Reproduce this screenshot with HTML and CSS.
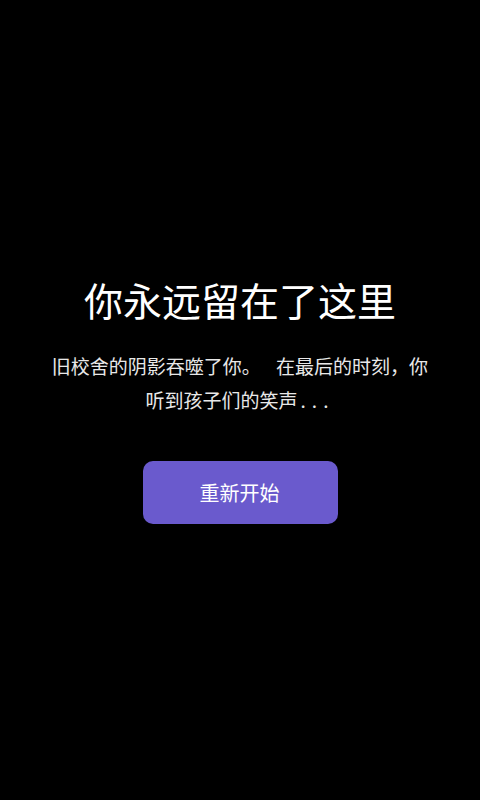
FILE: index.html
```html
<!DOCTYPE html>
<html lang="zh-CN">
<head>
<meta charset="utf-8">
<title>结局</title>
<link rel="stylesheet" href="styles.css">
</head>
<body>
<main class="ending">
  <h1 class="ending-title">你永远留在了这里</h1>
  <p class="ending-text">旧校舍的阴影吞噬了你。 在最后的时刻，你听到孩子们的笑声<span class="dots">...</span></p>
  <button class="restart-btn" type="button">重新开始</button>
</main>
</body>
</html>
```

FILE: styles.css
```css
html, body {
  margin: 0;
  padding: 0;
  background: #000;
}

body {
  font-family: "Noto Sans CJK SC", "Noto Sans", sans-serif;
  color: #fff;
}

.ending {
  height: 100vh;
  display: flex;
  flex-direction: column;
  align-items: center;
  justify-content: center;
  text-align: center;
}

.ending-title {
  margin: 0;
  font-size: 39px;
  font-weight: 400;
  line-height: 47px;
  color: #fff;
}

.ending-text {
  width: 384px;
  margin: 26px 0 0;
  font-size: 19px;
  line-height: 34px;
  color: #e8e8e8;
  word-spacing: 11px;
}

.dots {
  letter-spacing: 6px;
  margin-left: 3px;
}

.restart-btn {
  margin-top: 44px;
  padding: 16px 58px 16px 57px;
  border: none;
  border-radius: 10px;
  background: #6a5acd;
  color: #fff;
  font-family: "Noto Sans CJK SC", "Noto Sans", sans-serif;
  font-size: 20px;
  line-height: 31px;
  cursor: pointer;
}
```
